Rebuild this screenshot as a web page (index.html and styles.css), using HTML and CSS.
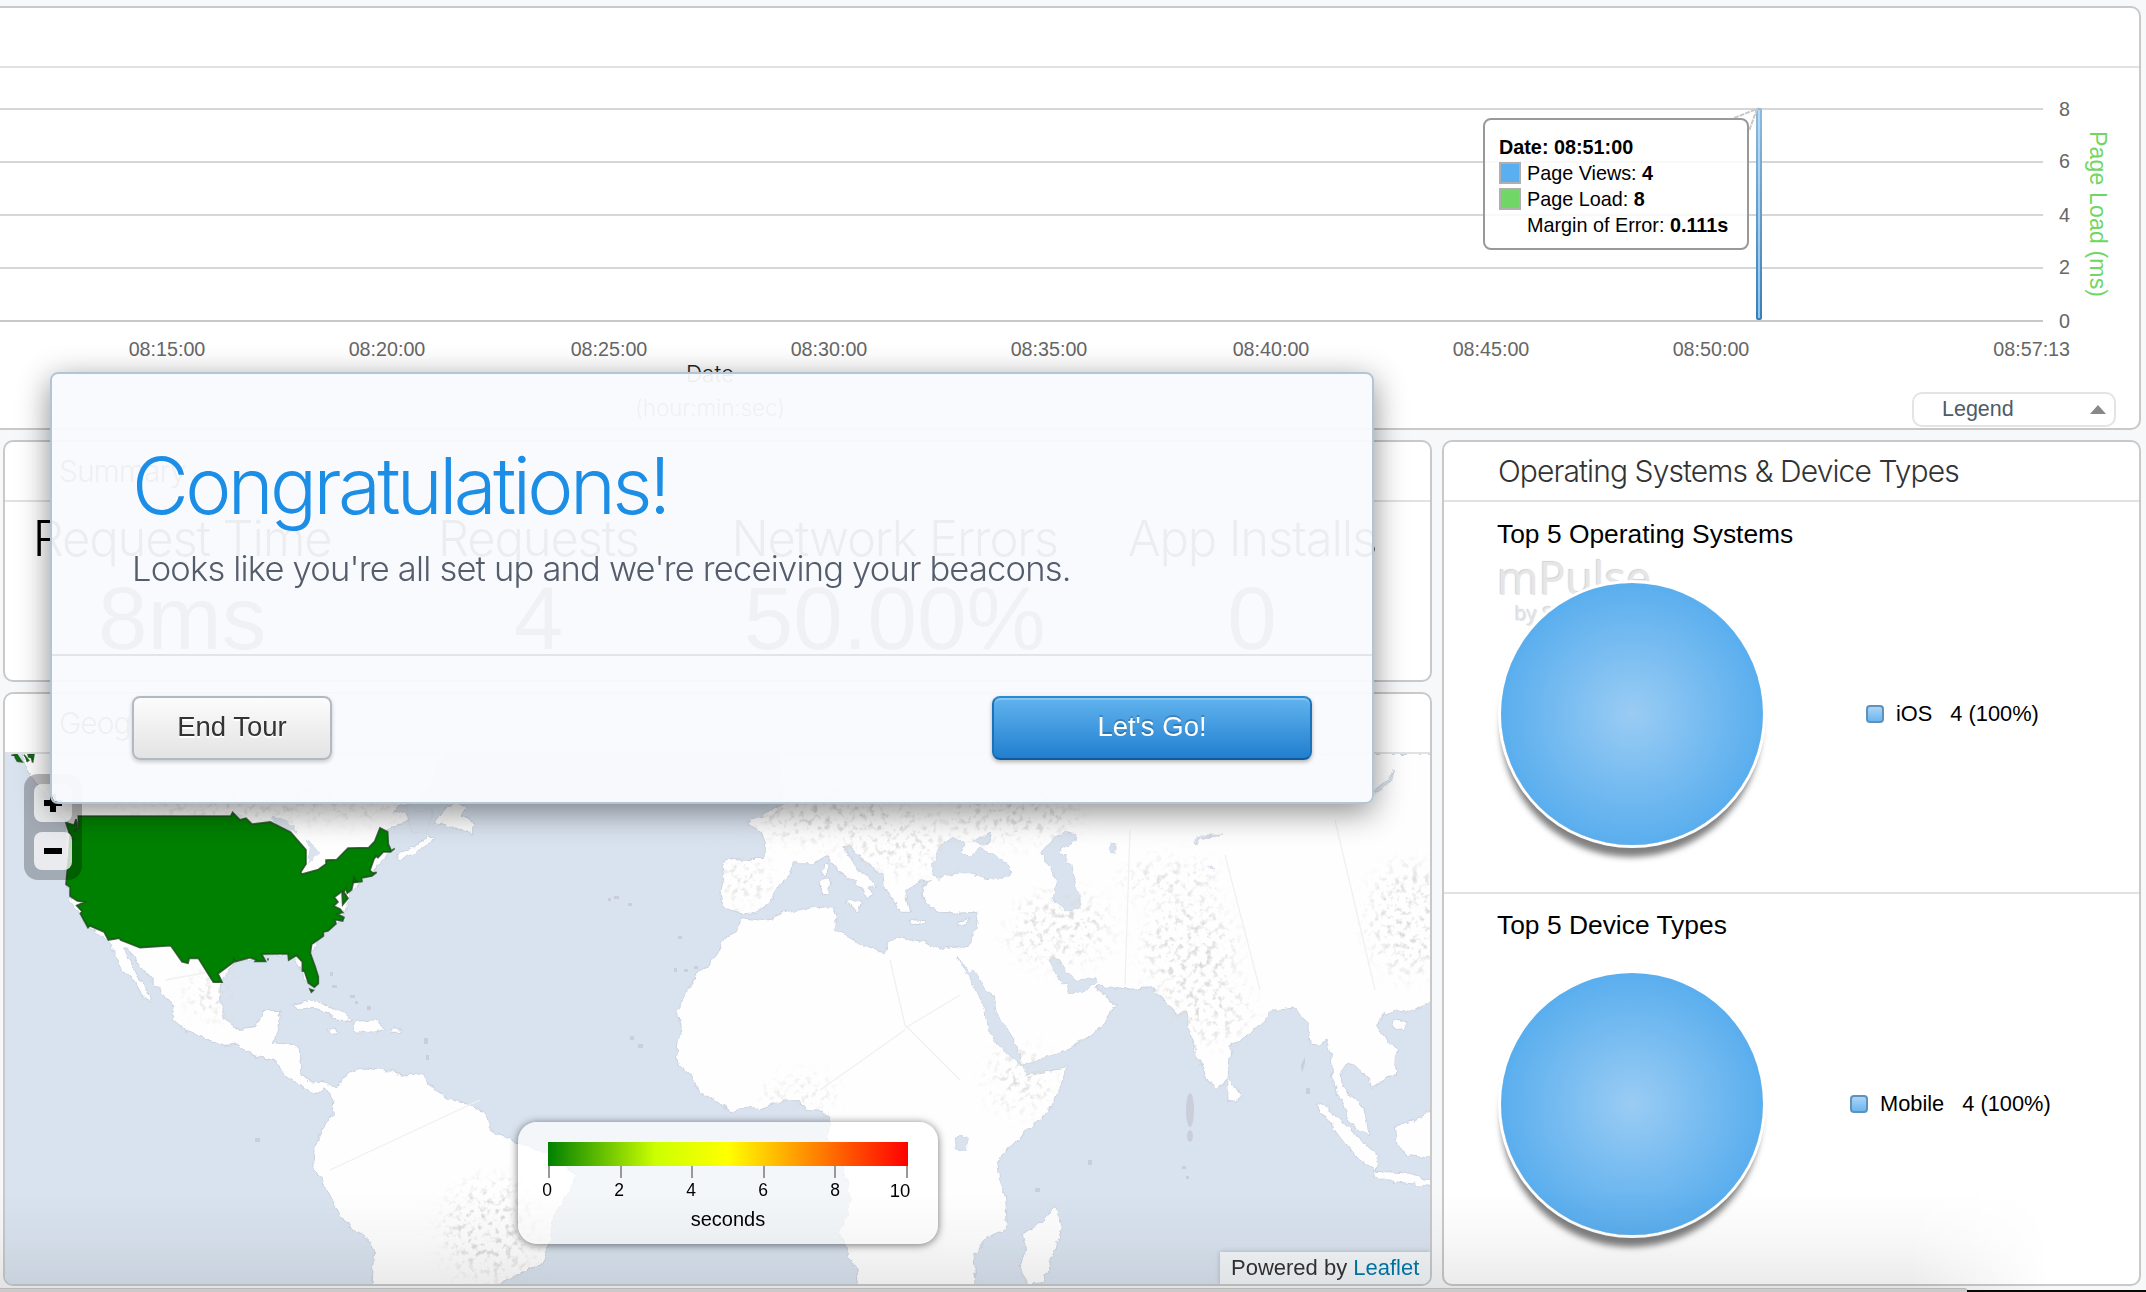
FILE: index.html
```html
<!DOCTYPE html>
<html lang="en">
<head>
<meta charset="utf-8">
<title>mPulse Dashboard</title>
<link rel="stylesheet" href="styles.css">
</head>
<body>
<main class="dashboard">
  <section class="panel chart-panel">
    <header class="panel-head"></header>
    <svg class="chart" width="2139" height="322" viewBox="0 68 2139 322">
      <g class="grid">
        <path d="M0 109H2043M0 162H2043M0 215H2043M0 268H2043"/>
        <path class="base" d="M0 321H2043"/>
      </g>
      <g class="tick" text-anchor="end">
        <text x="2070" y="116">8</text><text x="2070" y="168">6</text><text x="2070" y="222">4</text><text x="2070" y="274">2</text><text x="2070" y="328">0</text>
        <text x="2070" y="356">08:57:13</text>
      </g>
      <g class="tick" text-anchor="middle">
        <text x="167" y="356">08:15:00</text><text x="387" y="356">08:20:00</text><text x="609" y="356">08:25:00</text><text x="829" y="356">08:30:00</text><text x="1049" y="356">08:35:00</text><text x="1271" y="356">08:40:00</text><text x="1491" y="356">08:45:00</text><text x="1711" y="356">08:50:00</text>
      </g>
      <defs>
        <linearGradient id="barStroke" x1="0" y1="0" x2="0" y2="1"><stop offset="0" stop-color="#8fb9da"/><stop offset="1" stop-color="#3c7fb2"/></linearGradient>
        <linearGradient id="barFill" x1="0" y1="0" x2="0" y2="1"><stop offset="0" stop-color="#b5dbf9"/><stop offset="1" stop-color="#8cc6f4"/></linearGradient>
      </defs>
      <rect x="1757" y="109" width="4" height="210" rx="1" fill="url(#barFill)" stroke="url(#barStroke)" stroke-width="2"/>
      <path d="M1734 118L1757 109L1749 131" fill="none" stroke="#c9c9c9" stroke-width="2" stroke-dasharray="5 1"/>
      <text class="axis-name" transform="translate(2090 131) rotate(90)" textLength="166">Page Load (ms)</text>
      <text class="axis-title" x="710" y="382" text-anchor="middle">Date</text>
    </svg>
    <footer class="chart-foot">
      <span class="axis-unit">(hour:min:sec)</span>
      <button class="legend-toggle">Legend<i class="caret"></i></button>
    </footer>
    <div class="tooltip">
      <div><b>Date: 08:51:00</b></div>
      <div class="tip-row"><i class="swatch blue"></i><span>Page Views: <b>4</b></span></div>
      <div class="tip-row"><i class="swatch green"></i><span>Page Load: <b>8</b></span></div>
      <div class="tip-row"><i class="swatch none"></i><span>Margin of Error: <b>0.111s</b></span></div>
    </div>
  </section>

  <div class="columns">
    <div class="left">
      <section class="panel summary">
        <header class="panel-head ghost-head">Summary</header>
        <div class="metrics">
          <div class="metric"><h3 class="m1">Request Time</h3><p>8ms</p></div>
          <div class="metric"><h3 class="m2">Requests</h3><p>4</p></div>
          <div class="metric"><h3 class="m3">Network Errors</h3><p>50.00%</p></div>
          <div class="metric"><h3 class="m4">App Installs</h3><p>0</p></div>
        </div>
      </section>

      <section class="panel geo">
        <header class="panel-head ghost-head">Geography</header>
        <div class="map">
          <svg width="1425" height="530" viewBox="5 754 1425 530">
            <defs>
              <filter id="rough" filterUnits="userSpaceOnUse" x="0" y="740" width="1440" height="560">
                <feTurbulence type="fractalNoise" baseFrequency=".11" numOctaves="3" seed="4"/>
                <feDisplacementMap in="SourceGraphic" scale="7" xChannelSelector="R" yChannelSelector="G"/>
              </filter>
              <filter id="terrain" filterUnits="userSpaceOnUse" x="0" y="740" width="1440" height="560">
                <feGaussianBlur in="SourceAlpha" stdDeviation="12" result="area"/>
                <feTurbulence type="fractalNoise" baseFrequency=".16" numOctaves="3" seed="9"/>
                <feColorMatrix values="0 0 0 0 .72  0 0 0 0 .71  0 0 0 0 .70  4 0 0 0 -2.05"/>
                <feComposite in2="area" operator="in"/>
              </filter>
              <g id="west">
                <path d="M60 30L90 100L140 160L200 230L200 410L210 445L265 530L325 568L345 605L370 655L400 680L430 730L452 742L440 712L415 675L385 625L364 588L385 590L410 630L450 670L480 710L520 760L522 795L560 825L620 848L675 866L715 862L755 893L825 910L860 950L905 985L950 1003L975 985L1000 1020L998 1065L965 1105L945 1150L940 1215L975 1265L1018 1345L1050 1385L1100 1410L1122 1450L1118 1560L1480 1560L1500 1545L1560 1515L1625 1487L1645 1439L1660 1345L1710 1278L1725 1240L1680 1184L1620 1169L1540 1141L1470 1108L1450 1058L1400 1030L1340 1022L1285 980L1270 950L1220 952L1150 938L1100 930L1050 945L1010 990L975 975L930 972L900 945L900 880L870 865L815 862L835 820L840 770L790 770L770 815L705 822L670 785L657 740L660 690L705 630L800 610L880 610L930 700L955 690L930 600L970 555L1030 500L1050 430L1120 370L1170 315L1150 290L1160 255L1225 225L1215 205L1170 210L1200 185L1262 170L1340 30Z"/>
                <path d="M1190 325L1250 300L1285 272L1303 285L1250 315L1200 342Z"/>
                <path d="M1345 185L1308 235L1370 250L1415 268L1420 235L1385 215L1400 190L1370 180Z"/>
                <path d="M880 752L930 740L975 752L1020 775L1055 795L1010 795L985 775L940 758L890 765Z"/>
                <path d="M1070 800L1120 797L1152 820L1105 832L1055 822Z"/>
                <path d="M985 825L1005 820L1020 828L1000 832ZM1175 822L1205 822L1200 829L1176 829Z"/>
              </g>
              <g id="europe">
                <path d="M900 -78L910 75L880 90L855 95L848 115L805 118L808 132L845 155L858 190L857 240L800 240L740 236L727 250L733 290L722 345L730 385L765 388L785 403L830 392L870 370L885 330L925 290L940 250L1000 250L1040 225L1070 270L1130 305L1155 335L1160 358L1178 345L1165 318L1195 320L1150 285L1110 240L1090 200L1110 195L1150 240L1210 285L1215 325L1250 370L1262 395L1290 395L1275 330L1300 308L1355 300L1325 320L1340 370L1380 397L1440 402V-78Z"/>
                <path d="M1440 506L1380 510L1330 490L1260 475L1225 485L1215 522L1150 500L1120 475L1060 450L1070 410L1060 382L1000 385L920 395L860 425L785 415L775 450L735 475L715 520L690 555L655 575L630 620L595 690L605 740L590 820L597 855L640 890L660 935L755 993L800 980L850 985L900 962L960 960L985 990L1030 992L1050 1015L1040 1070L1090 1170L1115 1260L1082 1360L1110 1430L1130 1470L1133 1530H1440Z"/>
                <path d="M1032 252H1043L1040 286L1030 280ZM1026 300L1047 295L1045 345L1026 345ZM1095 368L1145 362L1138 392ZM1285 420L1335 424L1333 430L1288 428Z"/>
              </g>
              <g id="asia">
                <path d="M0 -78V400L115 395L105 450L85 505L40 500L0 508V1530H108L100 1420L145 1370L190 1350L200 1330L195 1250L178 1200L172 1150L200 1110L250 1060L320 1000L355 930L378 865L265 886L240 855L320 830L385 805L455 765L490 730L525 675L500 655L465 620L475 612L550 627L635 622L680 665L715 703L738 695L748 750L775 830L805 900L825 930L862 895L872 800L930 760L985 710L990 692L1065 682L1105 735L1112 795L1135 795L1160 780L1175 830L1182 920L1215 980L1230 1030L1285 1062L1270 985L1205 915L1200 860L1235 850L1290 900L1295 920L1365 880L1368 810L1310 740L1325 705L1360 690L1400 695L1490 665V-78Z"/>
                <path d="M345 1278L365 1330L345 1400L310 1505L265 1512L242 1460L258 1410L252 1360L310 1325ZM865 895L900 945L890 965L865 962ZM1128 970L1165 985L1230 1050L1270 1090L1310 1120L1308 1170L1260 1140L1210 1080L1165 1020ZM1490 975L1430 1020L1365 1040L1370 1090L1400 1125L1490 1135ZM1305 1175L1390 1180L1490 1205V1220L1380 1205L1310 1192ZM1357 735L1372 720L1398 722L1388 748L1365 750ZM52 432L90 415L75 435Z"/>
              </g>
              <g id="land">
                <use href="#west" transform="translate(0 740) scale(.33333 .35204)"/>
                <use href="#europe" transform="translate(480 780) scale(.33333)"/>
                <use href="#asia" transform="translate(940 780) scale(.33333)"/>
              </g>
            </defs>
            <rect x="0" y="740" width="1440" height="560" fill="#d9e3ef"/>
            <g filter="url(#rough)">
              <use href="#land" fill="#fefefe" stroke="#cdd4e0" stroke-width="6" stroke-linejoin="round"/>
              <use href="#land" fill="#fefefe"/>
              <g transform="translate(940 780) scale(.33333)" fill="#d9e3ef" stroke="#d0d7e3" stroke-width="3">
                <path d="M-20 290L0 295L45 280L90 278L140 295L190 298L213 280L205 255L165 225L120 205L85 235L65 215L75 195L40 172L20 185L0 195L-22 250Z"/>
                <path d="M100 185L155 158L145 190L110 195Z"/>
                <path d="M305 215L340 175L380 157L408 165L405 185L365 200L360 215L395 255L405 300L400 320L420 350V388L385 392L340 365L345 325L355 300L320 255Z"/>
                <path d="M52 530L88 577L100 570L130 615L160 650L170 700L205 750L230 800L242 856L175 795L140 735L135 690L110 640L85 590Z"/>
                <path d="M325 545L340 528L360 540L375 570L410 595L435 602L468 590L470 605L425 640H385L378 612L365 608Z"/>
                <path d="M45 1070H85L78 1108H50Z"/>
                <path d="M760 190L785 165L850 166L785 172L765 195ZM1300 35L1345 0L1360 -30L1350 10L1310 40ZM508 215L515 185L525 188V218ZM800 262L830 262L815 268Z"/>
              </g>
              <g transform="translate(0 740) scale(.33333 .35204)" fill="#d9e3ef" stroke="#d0d7e3" stroke-width="2">
                <path d="M815 220L860 225L890 265L830 240ZM915 275L960 320L925 350L930 310ZM1220 185L1262 205L1300 190L1280 265L1235 260Z"/>
              </g>
            </g>
            <g filter="url(#terrain)">
              <ellipse cx="830" cy="815" rx="80" ry="26"/><ellipse cx="745" cy="880" rx="25" ry="20"/><ellipse cx="900" cy="840" rx="45" ry="30"/>
              <ellipse cx="1010" cy="815" rx="70" ry="24"/><ellipse cx="1060" cy="930" rx="50" ry="35"/><ellipse cx="1190" cy="950" rx="45" ry="50"/><ellipse cx="1170" cy="880" rx="50" ry="15"/>
              <ellipse cx="1410" cy="920" rx="40" ry="55"/><ellipse cx="280" cy="805" rx="170" ry="12"/><ellipse cx="215" cy="990" rx="25" ry="25"/><ellipse cx="800" cy="1092" rx="40" ry="10"/><ellipse cx="490" cy="1230" rx="45" ry="50"/><ellipse cx="1020" cy="1080" rx="30" ry="30"/><ellipse cx="1210" cy="1010" rx="40" ry="30"/>
            </g>
            <g class="border-lines">
              <path d="M330 1170L480 1100M890 960L905 1025L960 1080M905 1030L820 1090M905 1028L960 995M1130 830L1125 985M1225 855L1260 990M1335 820L1375 990M165 980L220 970"/>
            </g>
            <g fill="#c9ced9">
              <ellipse cx="1190" cy="1110" rx="4" ry="17"/><ellipse cx="1190" cy="1136" rx="3" ry="6"/>
              <path d="M355 1001h3v3h-3zM367 1006h4v4h-4zM614 896h5v3h-5zM608 898h3v3h-3zM628 903h4v3h-4zM678 936h4v3h-4zM674 968h3v4h-3zM684 969h4v3h-4zM694 966h4v3h-4zM630 1036h4v4h-4zM638 1044h5v4h-5zM255 1138h5v4h-5zM1301 1065l4-8v6l-3 10zM1306 1088h4v6h-4zM424 1038h4v6h-4zM426 1055h3v5h-3zM1182 1166h4v3h-4zM1186 1176h3v3h-3zM1035 1188h5v4h-5zM1088 1160h4v5h-4zM332 985h5v3h-5zM350 995h5v3h-5zM330 972h3v4h-3z"/>
            </g>
            <g class="usa" transform="translate(0 740) scale(.33333 .35204)">
              <path d="M235 216L692 216L698 206L720 227L738 222L756 239L811 233L872 262L918 312L918 352L902 376L906 381L955 368L978 352L978 341L1010 340L1044 307L1106 306L1124 288L1140 250L1163 261L1165 296L1174 315L1184 308L1172 318L1150 318L1134 334L1128 330L1122 338L1110 370L1118 378L1130 376L1116 386L1085 392L1086 402L1060 405L1055 425L1042 435L1037 422L1032 432L1044 450L1028 468L1026 430L1003 447L1014 460L1001 472L1020 480L1028 490L1012 494L1032 504L1028 514L1005 510L1008 522L985 542L970 546L970 557L935 580L931 606L944 640L955 672L955 692L943 702L925 690L914 658L907 656L907 630L889 612L866 625L864 607L785 608L797 629L765 629L768 624L750 618L703 630L702 618L702 630L654 664L666 688L640 688L595 620L568 620L564 634L546 630L512 584L420 590L362 568L358 563L325 568L312 545L270 528L264 533L241 493L246 487L230 470L254 460L232 457L210 443L210 418L198 410L206 330L210 272L222 284L207 262L198 235L222 242L228 225L232 250L222 260L235 250Z"/>
              <path d="M1062 390L1070 402L1060 403ZM930 708L940 711L934 716ZM804 620V626"/>
              <path d="M34 44L50 40L66 62L52 60L44 46M72 42L86 58L80 62M84 40L102 40L98 64L94 50L86 48Z"/>
            </g>
          </svg>
          <div class="zoom"><span class="zbtn"><i class="bar-h"></i><i class="bar-v"></i></span><span class="zbtn"><i class="bar-h"></i></span></div>
          <div class="scale">
            <div class="ramp"></div>
            <div class="ticks"><i></i><i></i><i></i><i></i><i></i><i></i></div>
            <div class="nums"><span>0</span><span>2</span><span>4</span><span>6</span><span>8</span><span class="last">10</span></div>
            <div class="unit">seconds</div>
          </div>
          <div class="credit">Powered by <a>Leaflet</a></div>
        </div>
      </section>
    </div>

    <section class="panel devices">
      <header class="panel-head devices-head"><span>Operating Systems &amp; Device Types</span></header>
      <div class="block">
        <h2 class="h-os">Top 5 Operating Systems</h2>
        <div class="watermark"><b>mPulse</b><small>by SOASTA</small></div>
        <div class="pie-row"><div class="pie"></div><div class="key k-os"><i></i><span class="name">iOS</span><span>4 (100%)</span></div></div>
      </div>
      <div class="block second">
        <h2 class="h-dev">Top 5 Device Types</h2>
        <div class="pie-row"><div class="pie"></div><div class="key k-dev"><i></i><span class="name">Mobile</span><span>4 (100%)</span></div></div>
      </div>
    </section>
  </div>
</main>

<div class="window-shade"></div>
<div class="window-edge"></div>
<div class="desktop-edge"></div>

<div class="modal">
  <div class="modal-body">
    <h1>Congratulations!</h1>
    <p>Looks like you're all set up and we're receiving your beacons.</p>
  </div>
  <div class="modal-actions">
    <button class="btn plain">End Tour</button>
    <button class="btn primary">Let's Go!</button>
  </div>
</div>
</body>
</html>
```
FILE: styles.css
```css
* { box-sizing: border-box; }
body {
  margin: 0;
  width: 2146px;
  height: 1292px;
  position: relative;
  overflow: hidden;
  background: #f7f8fa;
  font-family: "Liberation Sans", Arial, sans-serif;
  color: #000;
}
h1, h2, h3, p { margin: 0; font-weight: 400; }
button { font-family: inherit; padding: 0; }

.dashboard { padding: 6px 5px 0 3px; display: flex; flex-direction: column; gap: 10px; }
.panel { background: #fff; border: 2px solid #c9c9c9; border-radius: 10px; overflow: hidden; }
.panel-head { height: 60px; border-bottom: 2px solid #e2e2e2; }

/* Timeline chart */
.chart-panel { position: relative; height: 424px; margin-left: -13px; padding-left: 8px; }
.chart-panel .panel-head { margin-left: -8px; }
.chart { display: block; }
.grid path { stroke: #d6d6d6; stroke-width: 2; }
.grid .base { stroke: #c8c8c8; }
.tick { font-size: 19.7px; fill: #666; }
.axis-name { font-size: 23px; fill: #70d665; }
.axis-title { font: 300 22.5px Inter, "Liberation Sans", sans-serif; fill: #222; }
.chart-foot { display: flex; align-items: flex-start; padding-left: 635px; }
.axis-unit { width: 150px; font: 300 22.5px/26px Inter, sans-serif; letter-spacing: -.1px; margin-top: 5px; color: #444; white-space: nowrap; }
.legend-toggle {
  margin: 2px 0 0 1127px; width: 204px; height: 35px;
  display: flex; align-items: center; justify-content: space-between;
  padding: 0 8px 0 28px; border: 2px solid #e4e4e4; border-radius: 10px;
  background: #fff; font-size: 21.5px; color: #4e5c66;
}
.caret { border: 8px solid transparent; border-top: 0; border-bottom: 9px solid #888; }
.tooltip {
  position: absolute; left: 1491px; top: 110px; width: 266px; height: 132px;
  border: 2px solid #999; border-radius: 8px; background: rgba(255,255,255,.85);
  padding: 14px 0 0 14px; font-size: 19.8px; line-height: 26px; white-space: nowrap;
}
.tip-row { display: flex; align-items: center; gap: 6px; }
.swatch { width: 22px; height: 22px; border: 2px solid #b0aeb0; }
.blue { background: #5aaff0; }
.green { background: #70d665; }
.none { border-color: transparent; }

.columns { display: grid; grid-template-columns: 1429px 699px; gap: 10px; }
.left { display: flex; flex-direction: column; gap: 10px; }

/* Summary */
.ghost-head { padding-left: 54px; font: 300 30px/58px Inter, sans-serif; letter-spacing: -1px; color: #333; }
.summary { height: 242px; }
.metrics { display: grid; grid-template-columns: repeat(4, 1fr); height: 178px; }
.metric { text-align: center; white-space: nowrap; border-right: 2px solid #eee; display: flex; flex-direction: column; align-items: center; padding-top: 7px; }
.metric:last-child { border: 0; }
.metric h3 { font: 300 49px/60px Inter, sans-serif; letter-spacing: -1.2px; color: #000; }
.metric p { font-size: 89px; line-height: 100px; margin-top: -1px; color: #555; }

/* Map */
.geo { height: 594px; }
.map { position: relative; height: 530px; }
.map svg { display: block; }
.border-lines path { fill: none; stroke: #f0f0f0; stroke-width: 1.3; }
.usa path { fill: #008000; stroke: #1c4a1c; stroke-opacity: .8; stroke-width: 5; stroke-linejoin: miter; }
.zoom {
  position: absolute; left: 19px; top: 20px; width: 58px; height: 106px; border-radius: 14px;
  background: rgba(0,0,0,.25); display: flex; flex-direction: column; gap: 10px; padding: 10px;
}
.zbtn { position: relative; width: 38px; height: 38px; border-radius: 8px; background: rgba(255,255,255,.77); display: flex; align-items: center; justify-content: center; }
.bar-h { width: 18px; height: 6px; background: #000; }
.bar-v { position: absolute; width: 6px; height: 18px; background: #000; }
.scale {
  position: absolute; left: 513px; top: 368px; width: 420px; height: 122px; border-radius: 19px;
  background: rgba(255,255,255,.7); box-shadow: 0 1px 9px rgba(0,0,0,.55); padding: 20px 30px 0;
}
.ramp { height: 24px; background: linear-gradient(90deg, #008000, #cf0 30%, #ff0 50%, #f00); }
.ticks { display: flex; justify-content: space-between; height: 12px; }
.ticks i { width: 2px; background: #999; }
.nums { display: grid; grid-template-columns: repeat(6, 72px); margin: 1px -37px 0; width: 432px; font-size: 17.5px; line-height: 22px; text-align: center; }
.nums .last { font-size: 18.5px; position: relative; left: -7px; top: 1px; }
.unit { text-align: center; font-size: 20px; line-height: 24px; margin-top: 6px; }
.credit {
  position: absolute; right: 0; bottom: 0; width: 210px; height: 32px; padding-left: 11px;
  background: rgba(255,255,255,.7); box-shadow: 0 0 5px rgba(0,0,0,.2);
  font-size: 22px; line-height: 31px; white-space: nowrap; color: #333;
}
.credit a { color: #0078a8; }

/* Devices */
.devices { height: 846px; }
.devices-head { padding-left: 54px; font: 300 30px/58px Inter, sans-serif; letter-spacing: -.9px; color: #333; white-space: nowrap; }
.block { position: relative; height: 392px; padding: 17px 0 0 53px; border-bottom: 2px solid #e2e2e2; }
.second { height: 390px; border: 0; padding-top: 16px; }
.block h2 { font-size: 26.4px; line-height: 30px; white-space: nowrap; }
.watermark { position: absolute; left: 53px; top: 47px; font-family: "Open Sans", sans-serif; color: #e6e6e6; text-shadow: -1px -1px 1px #d2d2d2; }
.watermark b { display: block; font-weight: 400; font-size: 45px; line-height: 58px; }
.watermark small { display: block; font-size: 20px; line-height: 22px; margin-left: 18px; margin-top: -4px; }
.pie-row { display: flex; align-items: center; margin: 34px 0 0 4px; position: relative; }
.second .pie-row { margin-top: 33px; }
.pie {
  width: 262px; height: 262px; border-radius: 50%;
  background: radial-gradient(circle closest-side, #9accf4, #5aaeee);
  box-shadow: 0 0 0 3px #fff, -1px 13px 6px -1px rgba(0,0,0,.5);
}
.key { display: flex; align-items: center; font-size: 21.8px; white-space: nowrap; }
.key i { width: 18px; height: 18px; border: 2px solid #5f92bb; border-radius: 4px; background: linear-gradient(#aad4f8, #6db6ef); margin-right: 12px; }
.k-os { margin-left: 103px; }
.k-dev { margin-left: 87px; }
.key .name { margin-right: 18px; }

/* Neighbouring window and its shadow along the bottom */
.window-shade {
  position: absolute; left: 0; right: 0; bottom: 0; height: 100px;
  background: linear-gradient(rgba(0,0,0,0), rgba(0,0,0,.03) 50%, rgba(0,0,0,.085));
  -webkit-mask: linear-gradient(90deg, #000 1910px, transparent 2050px);
  mask: linear-gradient(90deg, #000 1910px, transparent 2050px);
}
.window-edge { position: absolute; left: 0; bottom: 0; width: 1968px; height: 4px; background: #cbcbcc; border-top: 1px solid #b9b9b9; border-top-right-radius: 4px; }
.desktop-edge { position: absolute; left: 1967px; right: 0; bottom: 0; height: 2px; background: #0a0a05; }

/* Tour dialog */
.modal {
  position: absolute; left: 50px; top: 372px; width: 1324px; height: 432px;
  border: 2px solid #b1c5d6; border-radius: 8px; background: rgba(249,250,253,.95); background-clip: padding-box;
  box-shadow: 0 8px 32px rgba(0,0,0,.45);
}
.modal-body { height: 282px; border-bottom: 2px solid #dfe5ea; padding: 66px 0 0 80px; white-space: nowrap; }
.modal h1 { font: 300 78px/92px Inter, sans-serif; letter-spacing: -3.6px; color: #1c8ee6; }
.modal p { font: 300 34.5px/44px Inter, sans-serif; letter-spacing: -.8px; color: #545d6b; margin-top: 15px; }
.modal-actions { display: flex; justify-content: space-between; padding: 40px 60px 0 80px; }
.btn { height: 64px; border-radius: 8px; font-size: 27.5px; padding-bottom: 2px; }
.plain { width: 200px; border: 2px solid #b1bac2; background: linear-gradient(#fcfcfc, #e3e3e3); color: #333; text-shadow: 0 2px 0 #fff; box-shadow: 0 2px 4px rgba(0,0,0,.2); }
.primary { width: 320px; border: 2px solid #1b72b8; border-top-color: #2b8bd0; border-bottom-color: #115a9c; background: linear-gradient(#61b3ee, #217fcf); color: #fff; text-shadow: 0 -2px 0 rgba(0,0,0,.2); box-shadow: inset 0 2px 0 rgba(255,255,255,.25), 0 2px 4px rgba(0,0,0,.3); }
```
